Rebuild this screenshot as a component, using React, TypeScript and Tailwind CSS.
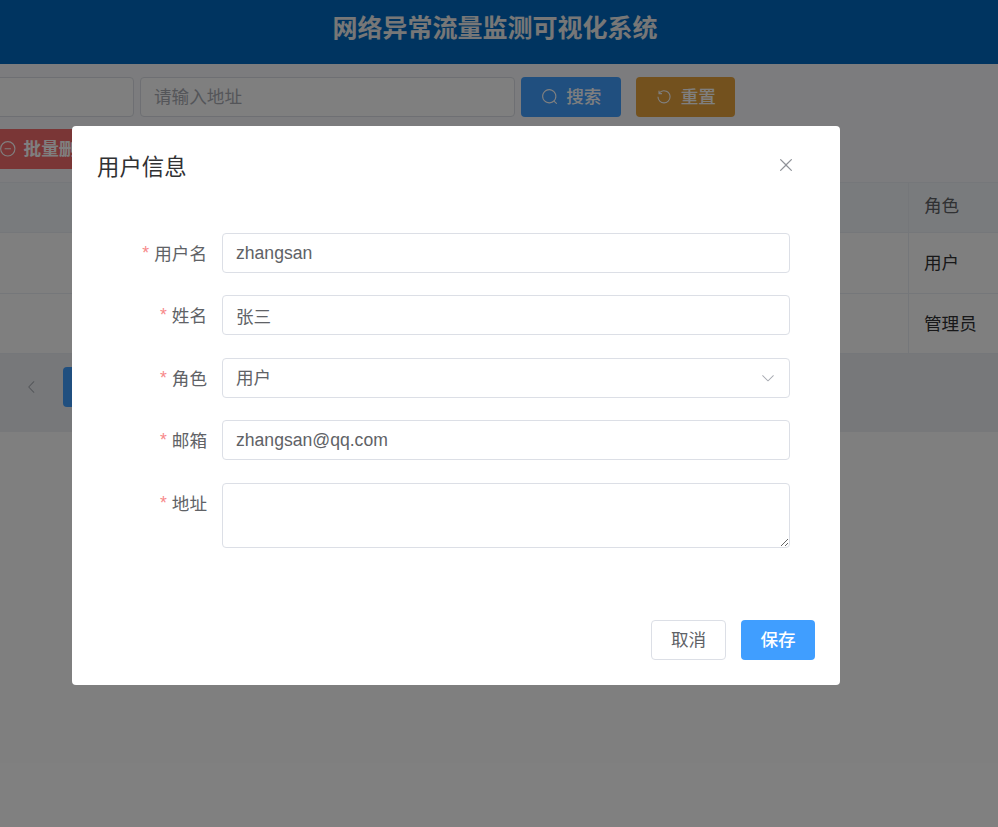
import React from "react";

const FONT = "[font-family:'Liberation_Sans','Noto_Sans_CJK_SC',sans-serif]";

function EpIcon({ d, className }: { d: string; className: string }) {
  return (
    <svg viewBox="0 0 1024 1024" className={className} fill="currentColor">
      <path d={d} />
    </svg>
  );
}

const SEARCH =
  "m795.904 750.72 124.992 124.928a32 32 0 0 1-45.248 45.248L750.656 795.904a416 416 0 1 1 45.248-45.248zM480 832a352 352 0 1 0 0-704 352 352 0 0 0 0 704z";
const REFRESH =
  "M289.088 296.704h92.992a32 32 0 0 1 0 64H232.96a32 32 0 0 1-32-32V179.712a32 32 0 0 1 64 0v50.56a384 384 0 0 1 643.84 282.88 384 384 0 0 1-383.936 384 384 384 0 0 1-384-384h64a320 320 0 1 0 640 0 320 320 0 0 0-555.712-216.448z";
const CLOSE =
  "M764.288 214.592 512 466.88 259.712 214.592a31.936 31.936 0 0 0-45.12 45.12L466.752 512 214.528 764.224a31.936 31.936 0 1 0 45.12 45.184L512 557.184l252.288 252.288a31.936 31.936 0 0 0 45.12-45.12L557.12 512.064l252.288-252.352a31.936 31.936 0 1 0-45.12-45.184z";
const ARROW_DOWN =
  "M831.872 340.864 512 652.672 192.128 340.864a30.592 30.592 0 0 0-42.752 0 29.12 29.12 0 0 0 0 41.6L489.664 714.24a32 32 0 0 0 44.672 0l340.288-331.712a29.12 29.12 0 0 0 0-41.728 30.592 30.592 0 0 0-42.752 0z";
const ARROW_LEFT =
  "M609.408 149.376 277.76 489.6a32 32 0 0 0 0 44.672l331.648 340.352a29.12 29.12 0 0 0 41.728 0 30.592 30.592 0 0 0 0-42.752L339.264 511.936l311.872-319.872a30.592 30.592 0 0 0 0-42.688 29.12 29.12 0 0 0-41.728 0z";
const REMOVE =
  "M352 480h320a32 32 0 1 1 0 64H352a32 32 0 0 1 0-64z M512 896a384 384 0 1 0 0-768 384 384 0 0 0 0 768zm0 64a448 448 0 1 1 0-896 448 448 0 0 1 0 896z";

function Field({ label, children, h = "h-10", top = "pt-[2px]" }: { label: string; children: React.ReactNode; h?: string; top?: string }) {
  return (
    <div className="flex mb-[22.4px]">
      <label className={`w-[135px] pr-[15px] ${top} h-10 flex items-center justify-end text-[17.6px] text-[#606266] shrink-0`}>
        <span className="text-[#f78989] mr-[5px] -mt-[2px]">*</span>
        {label}
      </label>
      <div className={`flex-1 ${h}`}>{children}</div>
    </div>
  );
}

const inputCls =
  "w-full h-full rounded border border-[#dcdfe6] px-[13px] text-[17.6px] text-[#606266] outline-none bg-white";

export default function App() {
  return (
    <div className={`relative h-[827px] w-full overflow-hidden bg-white ${FONT}`}>
      {/* page behind the dialog */}
      <header className="h-16 bg-[#0069c0] flex items-center justify-center pr-[8px] pb-[7px] text-[25px] font-bold text-[#eeeeee]">
        网络异常流量监测可视化系统
      </header>

      <main className="bg-[#f8f9fc] pt-[13px]">
        <div className="flex items-center -ml-[241px] h-10">
          <input
            className="w-[375px] h-full rounded border border-[#dcdfe6] bg-white px-[13px] text-[17.6px]"
            readOnly
          />
          <input
            className="ml-[6px] w-[375px] h-full rounded border border-[#dcdfe6] bg-white px-[13px] text-[17.6px] placeholder:text-[#a8abb2]"
            placeholder="请输入地址"
            readOnly
          />
          <button className="ml-[6px] w-[100px] h-full rounded bg-[#409eff] text-white flex items-center justify-center gap-2 text-[17.6px] font-medium">
            <EpIcon d={SEARCH} className="w-[17.6px] h-[17.6px]" />
            搜索
          </button>
          <button className="ml-[15px] w-[99px] h-full rounded bg-[#e6a23c] text-white flex items-center justify-center gap-2 text-[17.6px] font-medium">
            <EpIcon d={REFRESH} className="w-[17.6px] h-[17.6px]" />
            重置
          </button>
        </div>

        <div className="flex mt-3 -ml-[8px] h-10">
          <button className="w-[140px] h-full rounded bg-[#f56c6c] text-white flex items-center pl-[7px] gap-[7px] text-[17.6px] font-bold">
            <EpIcon d={REMOVE} className="w-[17.6px] h-[17.6px]" />
            批量删除
          </button>
        </div>

        <div className="mt-[13px] bg-white text-[17.6px] text-[#303133]">
          <div className="flex h-[51px] bg-[#f2f6fa] border-y border-[#ebeef5] text-[#606266]">
            <div className="w-[909px] border-r border-[#ebeef5] shrink-0" />
            <div className="pl-[15px] flex items-center pb-[3px]">角色</div>
          </div>
          <div className="flex h-[61px] border-b border-[#ebeef5]">
            <div className="w-[909px] border-r border-[#ebeef5] shrink-0" />
            <div className="pl-[15px] flex items-center">用户</div>
          </div>
          <div className="flex h-[60px] border-b border-[#ebeef5]">
            <div className="w-[909px] border-r border-[#ebeef5] shrink-0" />
            <div className="pl-[15px] flex items-center pt-[2px]">管理员</div>
          </div>
        </div>

        <div className="flex items-start h-[78px] pl-[24px] pt-[13px] bg-[#eef1f5]">
          <EpIcon d={ARROW_LEFT} className="w-4 h-4 mt-3 text-[#a8abb2]" />
          <div className="ml-[23px] w-10 h-10 rounded bg-[#409eff]" />
        </div>
      </main>

      {/* modal */}
      <div className="absolute inset-0 bg-black/50">
        <div className="absolute left-[72px] top-[126px] w-[768px] h-[559px] bg-white rounded flex flex-col">
          <div className="flex items-start justify-between pl-[25px] pr-[44px] pt-[26px]">
            <h2 className="text-[22.4px] leading-[32px] text-[#303133]">用户信息</h2>
            <EpIcon d={CLOSE} className="w-[20px] h-[20px] mt-[3px] text-[#909399]" />
          </div>
          <form className="pt-[49px] pr-[50px] pl-[15px] flex-1">
            <Field label="用户名">
              <input className={inputCls} defaultValue="zhangsan" />
            </Field>
            <Field label="姓名">
              <input className={inputCls} defaultValue="张三" />
            </Field>
            <Field label="角色">
              <div className={`${inputCls} flex items-center justify-between`}>
                <span>用户</span>
                <EpIcon d={ARROW_DOWN} className="w-4 h-4 text-[#a8abb2]" />
              </div>
            </Field>
            <Field label="邮箱">
              <input className={inputCls} defaultValue="zhangsan@qq.com" />
            </Field>
            <Field label="地址" h="h-[65px]" top="pt-[4px]">
              <textarea className={`${inputCls} block py-1`} />
            </Field>
          </form>
          <div className="flex justify-end gap-[15px] pr-[25px] pb-[25px]">
            <button className="w-[75px] h-10 rounded border border-[#dcdfe6] bg-white text-[#606266] text-[17.6px]">
              取消
            </button>
            <button className="w-[74px] h-10 rounded bg-[#409eff] text-white text-[17.6px] font-medium">
              保存
            </button>
          </div>
        </div>
      </div>
    </div>
  );
}
